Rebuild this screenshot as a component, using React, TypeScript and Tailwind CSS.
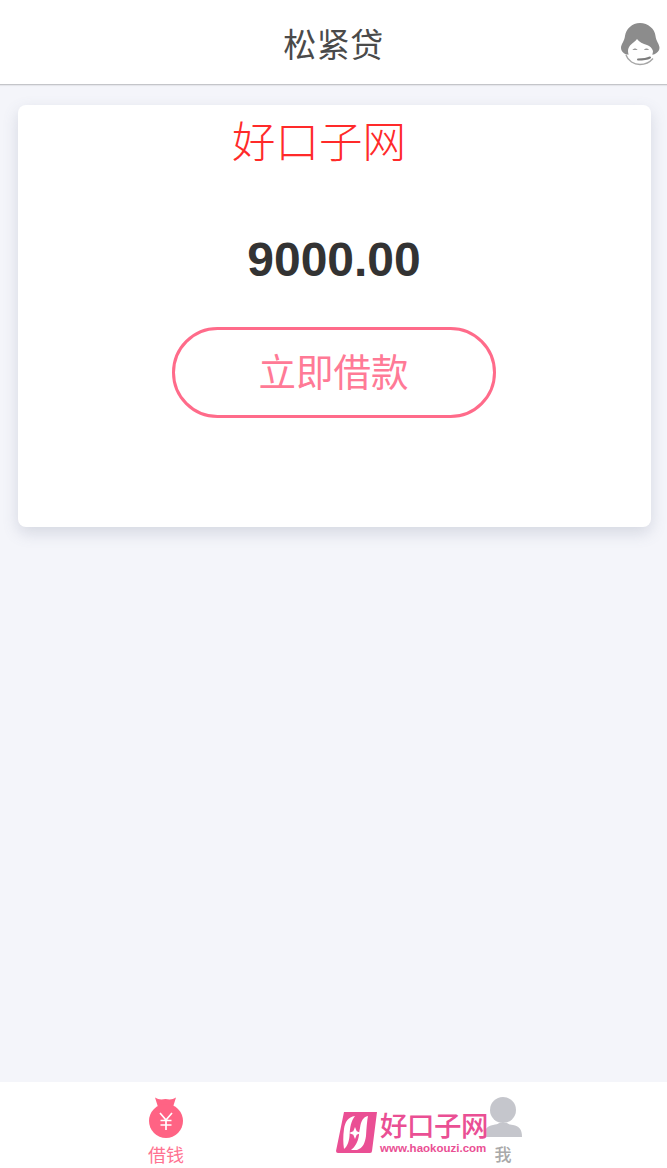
import { useState } from 'react';

const CJK = "font-['Liberation_Sans','Noto_Sans_CJK_SC',sans-serif]";

function AgentIcon() {
  return (
    <svg width="40" height="44" viewBox="0 0 40 44" className="shrink-0">
      {/* hair */}
      <path d="M19 1C11 1 5 7 4 14 3.500 19 0 22 0 26c0 3 2 5 5 6.500h28c3-1.500 5.500-3.500 5.500-6.500 0-4-3.500-7-4-12C34 7 27 1 19 1z" fill="#8c8c8c" />
      {/* face */}
      <path d="M7 29c0-6 6-8 9-12 2 3 6 5 10 6 3 1 5 3 6 6 0 6-6 10-13 10S7 35 7 29z" fill="#fff" />
      <path d="M11.500 28c1-2 4-2 5 0zM23 28c1-2 4-2 5 0z" fill="#9c9c9c" />
      <path d="M5 33c2 6 8 9.500 14 9.500 5 0 10-2.500 13-6" fill="none" stroke="#a6a6a6" strokeWidth="1.400" />
      <path d="M17 37.500c4 0 9-.5 12-2" fill="none" stroke="#7c7c7c" strokeWidth="2" strokeLinecap="round" />
    </svg>
  );
}

function BagIcon() {
  return (
    <svg width="34" height="41" viewBox="0 0 34 41">
      <path d="M6 .5c3 2 6 2.500 10.500 1.500 4.500 1 7.500.5 10.500-1.500L24 10H9z" fill="#ff6384" />
      <circle cx="17" cy="24" r="17" fill="#ff6384" />
      <path d="M11 16l6 7 6-7M17 23v10M11.500 23.500h11M11.500 28h11" fill="none" stroke="#fff" strokeWidth="1.700" />
    </svg>
  );
}

function PersonIcon() {
  return (
    <svg width="38" height="40" viewBox="0 0 38 40">
      <circle cx="19" cy="13" r="13" fill="#c5c6cc" />
      <path d="M0 40c0-8 3-11 9-12 3-.5 5-1 6-2h8c1 1 3 1.500 6 2 6 1 9 4 9 12z" fill="#c5c6cc" />
    </svg>
  );
}

function LogoMark() {
  return (
    <svg width="41" height="41" viewBox="0 0 41 41" className="shrink-0">
      <path d="M8 0h33l-5 39a2 2 0 0 1-2 2H2a2 2 0 0 1-2-2z" fill="#ea4f94" />
      <path d="M19 4C12 5 9 10 8 17c-1 7-1 14 0 20 3-2 5-7 5.500-13C14 15 15 9 19 4z" fill="#fff" />
      <path d="M32 4c-5 1-7 5-8 12-1 4-1 6-1 7-1 7-4 12-8 15h6c6-2 8-7 9-14 .5-8 1-15 2-20z" fill="#fff" />
      <path d="M19 15l1.700 4.300L25 21l-4.300 1.700L19 27l-1.700-4.300L13 21l4.300-1.700z" fill="#fff" />
    </svg>
  );
}

export default function App() {
  const [tab, setTab] = useState('loan');

  return (
    <div className={`relative flex h-[1168px] w-full flex-col overflow-hidden bg-[#f4f5fa] ${CJK}`}>
      {/* 헤더 */}
      <header className="flex h-[85px] shrink-0 items-center justify-between border-b border-[#c4c5c9] bg-white pl-[46px] pr-[6px] pt-[4px] shadow-[0_1px_1px_rgba(0,0,0,0.06)]">
        <h1 className="flex-1 pt-[2px] text-center text-[33px] leading-none tracking-[0.5px] text-[#4a4a4a]">松紧贷</h1>
        <AgentIcon />
      </header>

      <main className="flex-1 pl-[18px] pr-[16px] pt-[20px]">
        <section className="flex h-[422px] flex-col items-center rounded-lg bg-white pr-[2px] pt-[128px] shadow-[0_6px_16px_rgba(90,100,130,0.2)]">
          <div className="ml-[1px] font-['Liberation_Sans',sans-serif] text-[48px] font-bold leading-[54px] text-[#333]">9000.00</div>
          <button
            type="button"
            className="mt-[40px] flex h-[91px] w-[324px] items-center justify-center rounded-full border-[3px] border-[#ff6b8a] pt-[2px] text-[37.5px] text-[#ff7a96]"
          >
            立即借款
          </button>
        </section>
      </main>

      <nav className="flex h-[86px] shrink-0 bg-white">
        <button type="button" onClick={() => setTab('loan')} className="flex w-[332px] shrink-0 flex-col items-center pt-[15px]">
          <BagIcon />
          <span className="mt-[8px] text-[18px] leading-[20px] text-[#ff7391]">借钱</span>
        </button>
        <button type="button" onClick={() => setTab('me')} className="flex w-[342px] shrink-0 flex-col items-center pt-[15px]">
          <PersonIcon />
          <span className="mt-[9px] text-[17px] font-medium leading-[20px] text-[#a9a9a9]">我</span>
        </button>
      </nav>

      {/* 워터마크 */}
      <div className="pointer-events-none absolute left-[232px] top-[117px] font-['Liberation_Serif','Noto_Sans_CJK_SC',serif] text-[43.5px] font-light leading-[52px] text-[#ff2a2a]">
        好口子网
      </div>
      <div className="pointer-events-none absolute left-[336px] top-[1112px] flex items-start gap-[3px]" data-tab={tab}>
        <LogoMark />
        <div className="flex flex-col">
          <span className="text-[27.5px] font-medium leading-[30px] tracking-[-0.5px] text-[#ea4f94]">好口子网</span>
          <span className="font-['Liberation_Sans',sans-serif] text-[11.5px] font-bold leading-[13px] text-[#ea4f94]">www.haokouzi.com</span>
        </div>
      </div>
    </div>
  );
}
